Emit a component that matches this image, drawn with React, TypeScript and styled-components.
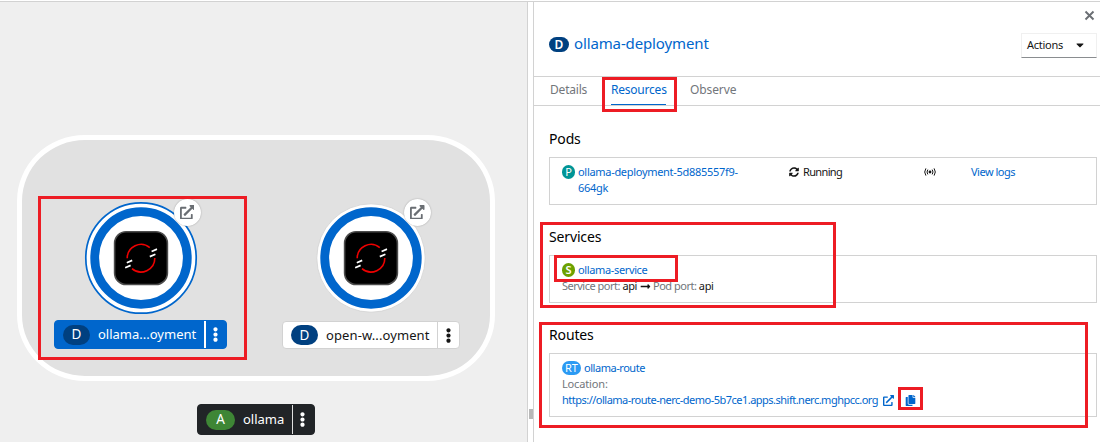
import React from "react";
import styled, { createGlobalStyle } from "styled-components";
import {
  FaCaretDown,
  FaCopy,
  FaEllipsisV,
  FaExternalLinkAlt,
  FaLongArrowAltRight,
  FaSyncAlt,
} from "react-icons/fa";

const Global = createGlobalStyle`
  * { box-sizing: border-box; }
  body {
    margin: 0;
    background: #fff;
    color: #151515;
    font-family: "Noto Sans", "Open Sans", sans-serif;
  }
`;

const Page = styled.div`
  position: relative;
  display: flex;
  width: 1100px;
  height: 442px;
  overflow: hidden;
  padding-top: 1px;
  background: #fff;
`;

const Canvas = styled.main`
  position: relative;
  width: 527px;
  border-top: 1px solid #d2d2d2;
  background: #efefef;
`;

const Splitter = styled.div`
  display: flex;
  flex-direction: column;
  width: 7px;
  padding-top: 407px;
  border: solid #d2d2d2;
  border-width: 1px 1px 0 1px;
`;

const Grip = styled.span`
  width: 4px;
  height: 10px;
  margin-left: 1px;
  background: #b8b8b8;
`;

const Group = styled.section`
  position: absolute;
  left: 17px;
  top: 133px;
  width: 478px;
  height: 246px;
  border: 5.5px solid #fff;
  border-radius: 68px / 66px;
  background: #e1e1e1;
`;

const Node = styled.div<{ $x: number }>`
  position: absolute;
  left: ${(p) => p.$x}px;
  top: 196px;
  width: 120px;
  height: 120px;
`;

const Decorator = styled.span`
  position: absolute;
  left: 93px;
  top: 0.5px;
  display: flex;
  align-items: center;
  justify-content: center;
  width: 27px;
  height: 27px;
  border-radius: 50%;
  background: #fff;
  box-shadow: 0 0 1.5px rgba(0, 0, 0, 0.35);
  color: #6a6e73;
  font-size: 14.5px;
`;

type Tone = "selected" | "plain" | "dark";
const tones = {
  selected: { bg: "#06c", fg: "#fff", line: "#06c", sep: "#fff" },
  plain: { bg: "#fff", fg: "#151515", line: "#d2d2d2", sep: "#d2d2d2" },
  dark: { bg: "#212427", fg: "#fff", line: "#212427", sep: "#e0e0e0" },
};

const Label = styled.div<{ $x: number; $y: number; $w: number; $h: number; $tone: Tone }>`
  position: absolute;
  left: ${(p) => p.$x}px;
  top: ${(p) => p.$y}px;
  display: flex;
  align-items: center;
  width: ${(p) => p.$w}px;
  height: ${(p) => p.$h}px;
  padding-left: 8px;
  border: 1px solid ${(p) => tones[p.$tone].line};
  border-radius: 4px;
  background: ${(p) => tones[p.$tone].bg};
  color: ${(p) => tones[p.$tone].fg};
  font-size: 13px;
  white-space: nowrap;
`;

const LabelText = styled.span<{ $ls?: number }>`
  flex: 1;
  padding: 0 0 1px 8px;
  letter-spacing: ${(p) => p.$ls ?? 0}px;
`;

const Kebab = styled.span<{ $tone: Tone }>`
  display: flex;
  align-items: center;
  justify-content: center;
  align-self: stretch;
  width: 22px;
  padding-right: ${(p) => (p.$tone === "plain" ? 0 : 2)}px;
  border-left: ${(p) => (p.$tone === "selected" ? 2 : 1)}px solid ${(p) => tones[p.$tone].sep};
  font-size: 15px;
`;

const Pill = styled.span<{ $bg: string; $w?: number }>`
  display: flex;
  align-items: center;
  justify-content: center;
  width: ${(p) => p.$w ?? 27}px;
  height: 20px;
  padding-bottom: 1px;
  border-radius: 10px;
  background: ${(p) => p.$bg};
  color: #fff;
  font-size: 13.5px;
`;

const Panel = styled.aside`
  display: flex;
  flex-direction: column;
  flex: 1;
  border-top: 1px solid #d2d2d2;
`;

const CloseRow = styled.div`
  display: flex;
  justify-content: flex-end;
  height: 31px;
  padding: 8px 5px 0 0;
`;

const TitleRow = styled.header`
  display: flex;
  align-items: flex-start;
  justify-content: space-between;
  height: 44px;
  padding: 0 3px 0 15px;
  border-bottom: 1px solid #d2d2d2;
`;

const Title = styled.h1`
  display: flex;
  align-items: center;
  gap: 5px;
  height: 22px;
  margin: 0;
  color: #06c;
  font-size: 15px;
  font-weight: 400;
  letter-spacing: -0.13px;
`;

const TitleText = styled.span`
  padding-bottom: 2px;
`;

const Badge = styled.span<{ $bg: string; $w: number; $h?: number; $fs?: number; $bold?: boolean }>`
  display: inline-flex;
  flex: none;
  align-items: center;
  justify-content: center;
  width: ${(p) => p.$w}px;
  height: ${(p) => p.$h ?? 14}px;
  border-radius: 8px;
  background: ${(p) => p.$bg};
  color: #fff;
  font-size: ${(p) => p.$fs ?? 11}px;
  font-weight: ${(p) => (p.$bold ? 600 : 400)};
  letter-spacing: 0;
`;

const ActionsButton = styled.button`
  display: flex;
  align-items: center;
  justify-content: space-between;
  width: 76px;
  height: 25px;
  padding: 0 10px 2px 5px;
  border: 1px solid #f0f0f0;
  border-bottom-color: #8a8d90;
  background: #fff;
  color: #151515;
  font: 11px "Noto Sans", sans-serif;
  letter-spacing: -0.25px;
`;

const Tabs = styled.nav`
  display: flex;
  gap: 24px;
  height: 29px;
  padding-left: 16px;
  border-bottom: 1px solid #d2d2d2;
  font-size: 12px;
`;

const Tab = styled.span<{ $active?: boolean; $w: number; $ls: number }>`
  width: ${(p) => p.$w}px;
  padding-top: 4px;
  border-bottom: 1px solid ${(p) => (p.$active ? "#06c" : "transparent")};
  color: ${(p) => (p.$active ? "#06c" : "#72767b")};
  line-height: 17px;
  letter-spacing: ${(p) => p.$ls}px;
  white-space: nowrap;
`;

const Sections = styled.div`
  display: flex;
  flex-direction: column;
  gap: 22px;
  padding: 23px 3px 0 15px;
`;

const Heading = styled.h2`
  height: 28px;
  margin: 0;
  color: #000;
  font-size: 14px;
  font-weight: 400;
  line-height: 20px;
  letter-spacing: -0.15px;
`;

const Card = styled.div<{ $h: number }>`
  display: flex;
  flex-direction: column;
  height: ${(p) => p.$h}px;
  padding: 6px 12px 0;
  border: 1px solid #d2d2d2;
  font-size: 11px;
  line-height: 16px;
`;

const Line = styled.div<{ $gap?: number }>`
  display: flex;
  align-items: center;
  gap: ${(p) => p.$gap ?? 3}px;
  height: 16px;
  white-space: nowrap;
`;

const PodRow = styled.div`
  display: grid;
  grid-template-columns: 227px 135px 47px 1fr;
`;

const PodName = styled.div`
  display: flex;
  align-items: flex-start;
  gap: 3px;
  width: 185px;

  & > :first-child {
    margin-top: 1px;
  }
`;

const Link = styled.span<{ $ls?: number }>`
  color: #06c;
  letter-spacing: ${(p) => p.$ls ?? 0}px;
`;

const Text = styled.span<{ $muted?: boolean; $ls?: number }>`
  color: ${(p) => (p.$muted ? "#72767b" : "#151515")};
  letter-spacing: ${(p) => p.$ls ?? 0}px;
`;

const IconSlot = styled.span<{ $left: number; $size: number }>`
  display: flex;
  margin-left: ${(p) => p.$left}px;
  color: #06c;
  font-size: ${(p) => p.$size}px;
`;

const Callout = styled.div<{ $x: number; $y: number; $w: number; $h: number }>`
  position: absolute;
  left: ${(p) => p.$x}px;
  top: ${(p) => p.$y}px;
  width: ${(p) => p.$w}px;
  height: ${(p) => p.$h}px;
  border: 3px solid #ed1c24;
  pointer-events: none;
`;

function Workload({ x, selected }: { x: number; selected?: boolean }) {
  return (
    <Node $x={x}>
      <svg width="120" height="120" viewBox="0 0 120 120">
        {selected ? (
          <circle cx="60" cy="60" r="55.2" fill="#fff" stroke="#06c" strokeWidth="1.7" />
        ) : (
          <circle cx="60" cy="60" r="54.2" fill="#fff" stroke="#d2d2d2" strokeWidth="0.8" />
        )}
        <circle cx="60" cy="60" r="46.3" fill="none" stroke="#06c" strokeWidth="8.8" />
        <rect x="33.6" y="33.7" width="52.8" height="52.8" rx="11.5" fill="#000" stroke="#4c4c4c" strokeWidth="1.6" />
        <g fill="none" stroke="#e00" strokeWidth="1.6">
          <path d="M46.2 60.2A13.8 13.8 0 0 1 68.8 49.6" />
          <path d="M73.8 60A13.8 13.8 0 0 1 51 70.6" />
        </g>
        <g stroke="#fff" strokeWidth="1.7">
          <path d="M70.6 53.5l5.4-2.4M68.8 58.6l5.6-2.4M45.8 64.8l5.4-2.4M44.2 69.8l5.4-2.4" />
        </g>
      </svg>
      <Decorator>
        <FaExternalLinkAlt />
      </Decorator>
    </Node>
  );
}

export default function App() {
  return (
    <Page>
      <Global />
      <Canvas>
        <Group />
        <Workload x={80.5} selected />
        <Workload x={311} />
        <Label $x={54} $y={318} $w={173} $h={29} $tone="selected">
          <Pill $bg="#004080">D</Pill>
          <LabelText>ollama...oyment</LabelText>
          <Kebab $tone="selected"><FaEllipsisV /></Kebab>
        </Label>
        <Label $x={282} $y={319} $w={178} $h={28} $tone="plain">
          <Pill $bg="#004080">D</Pill>
          <LabelText $ls={0.1}>open-w...oyment</LabelText>
          <Kebab $tone="plain"><FaEllipsisV /></Kebab>
        </Label>
        <Label $x={197} $y={402} $w={118} $h={31} $tone="dark">
          <Pill $bg="#3e8635" $w={29}>A</Pill>
          <LabelText>ollama</LabelText>
          <Kebab $tone="dark"><FaEllipsisV /></Kebab>
        </Label>
      </Canvas>
      <Splitter><Grip /></Splitter>
      <Panel>
        <CloseRow>
          <svg width="11" height="11" viewBox="0 0 11 11">
            <path d="M1.5 1.5l8 8M9.5 1.5l-8 8" stroke="#6a6e73" strokeWidth="1.9" />
          </svg>
        </CloseRow>
        <TitleRow>
          <Title>
            <Badge $bg="#004080" $w={20} $h={15} $fs={12} $bold>D</Badge>
            <TitleText>ollama-deployment</TitleText>
          </Title>
          <ActionsButton>Actions <FaCaretDown size={12} /></ActionsButton>
        </TitleRow>
        <Tabs>
          <Tab $w={37} $ls={-0.2}>Details</Tab>
          <Tab $w={55} $ls={-0.22} $active>Resources</Tab>
          <Tab $w={46} $ls={-0.1}>Observe</Tab>
        </Tabs>
        <Sections>
          <section>
            <Heading>Pods</Heading>
            <Card $h={48}>
              <PodRow>
                <PodName>
                  <Badge $bg="#009596" $w={13}>P</Badge>
                  <Link $ls={-0.3}>ollama-deployment-5d885557f9-<br />664gk</Link>
                </PodName>
                <Line $gap={4}><FaSyncAlt size={10} /><Text $ls={-0.65}>Running</Text></Line>
                <Line>
                  <svg width="12" height="8" viewBox="0 0 12 8" fill="none" stroke="#151515">
                    <circle cx="6" cy="4" r="1.4" fill="#151515" stroke="none" />
                    <path d="M3.8 1.6q-1.6 2.4 0 4.8M8.2 1.6q1.6 2.4 0 4.8M1.9.4q-2.4 3.6 0 7.2M10.1.4q2.4 3.6 0 7.2" />
                  </svg>
                </Line>
                <Line><Link $ls={-0.5}>View logs</Link></Line>
              </PodRow>
            </Card>
          </section>
          <section>
            <Heading>Services</Heading>
            <Card $h={48}>
              <Line><Badge $bg="#6ca100" $w={13} $bold>S</Badge><Link $ls={-0.36}>ollama-service</Link></Line>
              <Line $gap={2.5}>
                <Text $muted $ls={-0.5}>Service port:</Text><Text $ls={-0.4}>api</Text>
                <FaLongArrowAltRight size={11} />
                <Text $muted $ls={-0.5}>Pod port:</Text><Text $ls={-0.4}>api</Text>
              </Line>
            </Card>
          </section>
          <section>
            <Heading>Routes</Heading>
            <Card $h={64}>
              <Line><Badge $bg="#2b9af3" $w={19}>RT</Badge><Link $ls={-0.46}>ollama-route</Link></Line>
              <Line><Text $muted $ls={-0.15}>Location:</Text></Line>
              <Line $gap={0}>
                <Link $ls={-0.51}>https://ollama-route-nerc-demo-5b7ce1.apps.shift.nerc.mghpcc.org</Link>
                <IconSlot $left={5} $size={11}><FaExternalLinkAlt /></IconSlot>
                <IconSlot $left={11} $size={11}><FaCopy /></IconSlot>
              </Line>
            </Card>
          </section>
        </Sections>
      </Panel>
      <Callout $x={38} $y={196} $w={209} $h={164} />
      <Callout $x={602} $y={77} $w={75} $h={35} />
      <Callout $x={540} $y={222} $w={296} $h={86} />
      <Callout $x={554} $y={255} $w={124} $h={27} />
      <Callout $x={539} $y={322} $w={549} $h={106} />
      <Callout $x={898} $y={387} $w={25} $h={23} />
    </Page>
  );
}
